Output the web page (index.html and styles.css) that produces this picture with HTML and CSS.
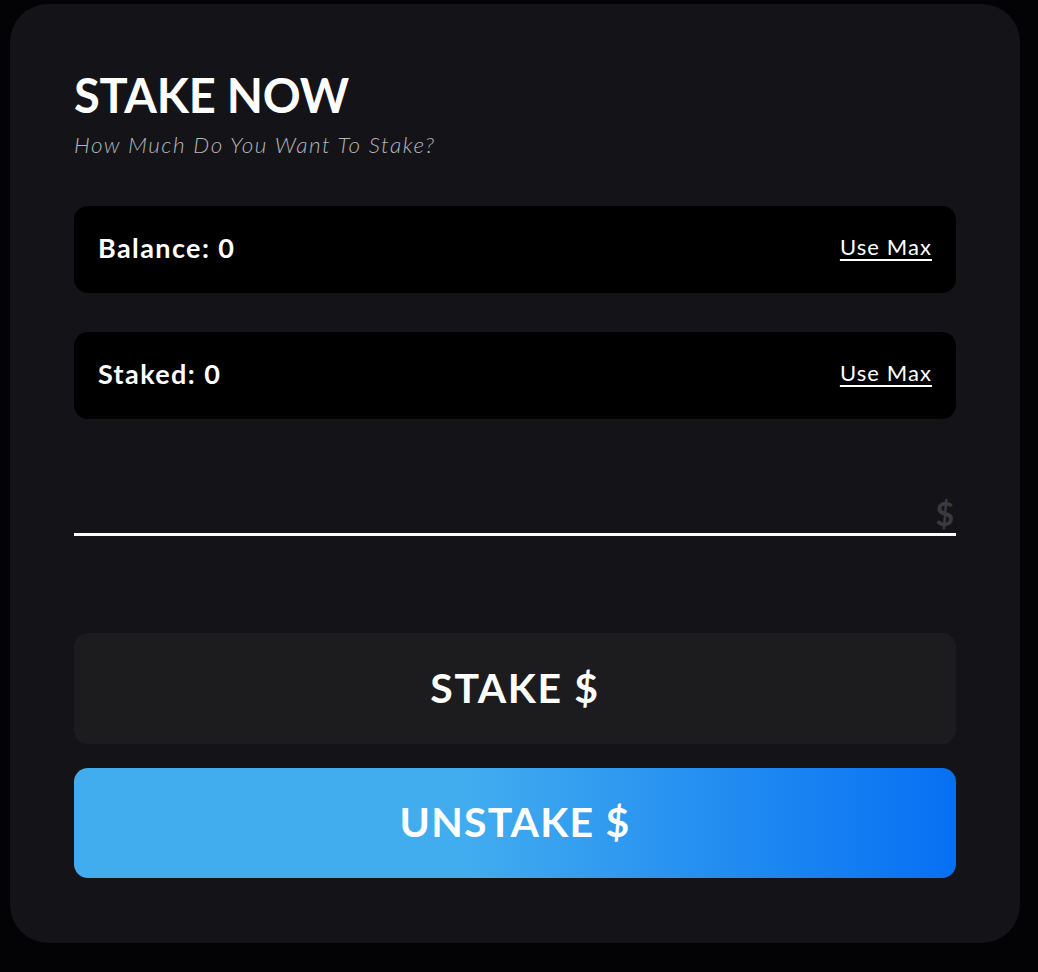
FILE: index.html
```html
<!DOCTYPE html>
<html>
<head>
<meta charset="utf-8">
<link rel="stylesheet" href="styles.css">
</head>
<body>
<div class="card">
  <h1 class="title">STAKE NOW</h1>
  <p class="subtitle">How Much Do You Want To Stake?</p>
  <div class="row">
    <span class="label">Balance: 0</span>
    <a class="max">Use Max</a>
  </div>
  <div class="row">
    <span class="label">Staked: 0</span>
    <a class="max">Use Max</a>
  </div>
  <div class="field">
    <span class="cur">$</span>
  </div>
  <button class="btn btn-stake">STAKE $</button>
  <button class="btn btn-unstake">UNSTAKE $</button>
</div>
</body>
</html>
```
FILE: styles.css
```css
html, body {
  margin: 0;
  padding: 0;
  background: #030305;
}
body {
  padding: 4px 18px 0 10px;
  font-family: Lato, "Noto Sans", sans-serif;
  color: #fff;
}
.card {
  background: #141418;
  border-radius: 38px;
  height: 939px;
  box-sizing: border-box;
  padding: 67px 64px 0 64px;
  display: flex;
  flex-direction: column;
}
.title {
  margin: 0;
  font-size: 47px;
  font-weight: 700;
  line-height: 48px;
  letter-spacing: -0.2px;
}
.subtitle {
  margin: 12px 0 0 0;
  font-size: 22.5px;
  font-style: italic;
  font-weight: 300;
  color: #b4b4b9;
  line-height: 28px;
  letter-spacing: 1.5px;
}
.row {
  background: #000;
  border-radius: 14px;
  height: 87px;
  margin-top: 47px;
  display: flex;
  align-items: center;
  justify-content: space-between;
  padding: 0 25px 0 24px;
}
.row + .row {
  margin-top: 39px;
}
.label {
  font-size: 27px;
  font-weight: 700;
  letter-spacing: 1.4px;
  margin-top: -5px;
}
.max {
  font-size: 22px;
  text-decoration: underline;
  text-decoration-thickness: 1.5px;
  text-underline-offset: 4px;
  color: #fff;
  letter-spacing: 1.1px;
  margin-right: -1px;
  margin-top: -6px;
}
.field {
  margin-top: 74px;
  height: 40px;
  border-bottom: 3px solid #fff;
  display: flex;
  justify-content: flex-end;
  align-items: flex-start;
}
.cur {
  font-size: 32px;
  font-weight: 700;
  color: #3a3a3e;
  line-height: 34px;
  margin-top: 4px;
  margin-right: 2px;
}
.btn {
  border: 0;
  border-radius: 14px;
  height: 111px;
  color: #fff;
  font-family: inherit;
  font-size: 41px;
  font-weight: 700;
  width: 100%;
  padding-bottom: 4px;
}
.btn-stake {
  margin-top: 97px;
  background: #1c1c1e;
  letter-spacing: 1.6px;
}
.btn-unstake {
  margin-top: 24px;
  height: 110px;
  letter-spacing: 1.2px;
  background: linear-gradient(90deg, #42adee 0%, #42adee 44%, #0670f3 100%);
}
```
